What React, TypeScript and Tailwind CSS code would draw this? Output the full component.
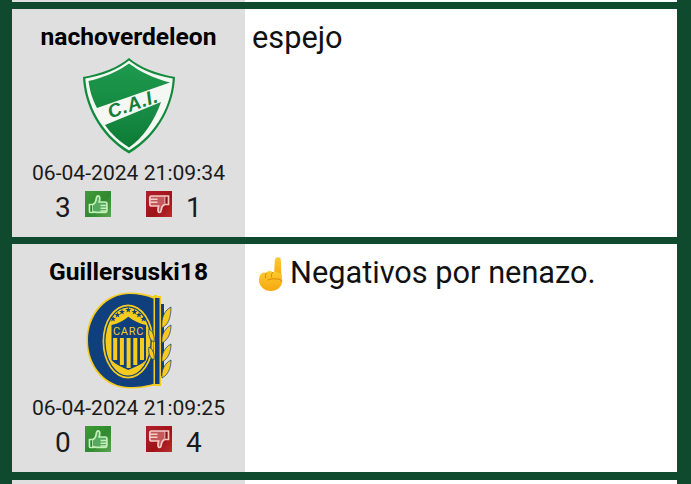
const font = { fontFamily: "Roboto, sans-serif" };

function ThumbUp() {
  return (
    <svg width="26" height="26" viewBox="0 0 26 26" className="block">
      <defs>
        <linearGradient id="gu" x1="0" y1="0" x2="1" y2="1">
          <stop offset="0" stopColor="#3f9c34" />
          <stop offset="0.55" stopColor="#2f8a30" />
          <stop offset="1" stopColor="#5aa44f" />
        </linearGradient>
      </defs>
      <rect width="26" height="26" fill="url(#gu)" />
      <path d="M4.500 13.500h3.500v8H5.500q-1 0-1-1z" fill="#2a7f2e" stroke="#c2f0b6" strokeWidth="1.700" />
      <path d="M8 13.500c2-1 3-3 3.200-5.500.2-1.800.8-3.200 2-3.200 1.500 0 1.800 2.200 1.400 4.200l-.5 2h6q1.800 0 1.800 1.800v7q0 1.500-1.500 1.500H11.500q-2 0-3.500-.8" fill="#57a860" stroke="#c2f0b6" strokeWidth="1.700" />
      <path d="M15.500 14.500h6.500M15.500 17.300h6.500M15.500 20h6" stroke="#c2f0b6" strokeWidth="1.500" />
    </svg>
  );
}

function ThumbDown() {
  return (
    <svg width="26" height="26" viewBox="0 0 26 26" className="block">
      <defs>
        <linearGradient id="gd" x1="0" y1="0" x2="1" y2="1">
          <stop offset="0" stopColor="#b0202a" />
          <stop offset="0.6" stopColor="#a01218" />
          <stop offset="1" stopColor="#bb2f2f" />
        </linearGradient>
      </defs>
      <rect width="26" height="26" fill="url(#gd)" />
      <path d="M18.500 5H22.500v8.500h-4z" fill="#8e1016" stroke="#f6cbc6" strokeWidth="1.700" />
      <path d="M18.500 13.500c-2 1-3 3-3.300 5.500-.2 1.500-.7 2.500-1.700 2.500-1.400 0-1.800-2-1.400-4l.5-2.500H5.500q-1.700 0-1.700-1.700V6.500Q3.800 5 5.500 5h13" fill="#c25a5c" stroke="#f6cbc6" strokeWidth="1.700" />
      <path d="M4 8.200h7.500M4 11.200h7.500" stroke="#f6cbc6" strokeWidth="1.500" />
    </svg>
  );
}

function CaiShield() {
  return (
    <svg width="93" height="96" viewBox="0 0 93 96" className="block">
      <defs>
        <linearGradient id="cai1" x1="0" y1="0" x2="0" y2="1">
          <stop offset="0" stopColor="#1f9a4e" />
          <stop offset="1" stopColor="#148a40" />
        </linearGradient>
        <linearGradient id="cai2" x1="0" y1="0" x2="0" y2="1">
          <stop offset="0" stopColor="#1a9048" />
          <stop offset="1" stopColor="#0c7a34" />
        </linearGradient>
      </defs>
      <path d="M46 0C36 9 18 16 0 19c1 26 15 58 46 76.500C77 77 91 45 92 19 74 16 56 9 46 0z" fill="#128a3d" />
      <path d="M46 2.500C36 11 19 18 2.300 20.500c1.500 25 15 54.500 43.700 72C75 75 88.500 45.500 89.700 20.500 73 18 56 11 46 2.500z" fill="#f4f7f2" />
      <path d="M46 5.500C36 13 20 20 5.500 23c1 8 3.500 18 8.500 27L87 24.500C72 21 56 13 46 5.500z" fill="url(#cai1)" />
      <path d="M78 44 22 67c6 9 14 16 24 22.500C60 80 72 62 78 44z" fill="url(#cai2)" />
      <text x="52" y="52" textAnchor="middle" fontSize="19" fontWeight="700" fontStyle="italic" letterSpacing="0.600" fill="#127f3a" transform="rotate(-19 52 52)" fontFamily="Liberation Sans, sans-serif">C.A.I.</text>
    </svg>
  );
}

function CarcBadge() {
  const navy = "#0f3f7d";
  const gold = "#f6cb1f";
  const stars = [
    [27, 27],
    [31.500, 23],
    [36, 20],
    [42.300, 18],
    [48.500, 20],
    [53, 23],
    [57.500, 27],
  ];
  const star = "M0-3 .8-1 3-1 1.200.3 1.900 2.500 0 1.200-1.900 2.500-1.200.3-3-1-.8-1z";
  return (
    <svg width="86" height="97" viewBox="0 0 86 97" className="block">
      <path d="M68 4.500C60 2 52 .5 44 .5 18 .5.500 22 .500 48.500S18 96.500 44 96.500c10 0 20-1.500 27-4V3h-3z" fill={gold} />
      <path d="M67 6.500C60 3.500 52 2 44 2 20 2 2 23 2 48.500S20 95 44 95c9 0 19-1.500 25.500-4V6z" fill={navy} />
      <ellipse cx="42" cy="49.500" rx="25.500" ry="37" fill={gold} />
      <ellipse cx="42" cy="49.500" rx="23.800" ry="35.300" fill={navy} />
      <ellipse cx="42" cy="49.500" rx="22.500" ry="34" fill={gold} />
      <path d="M67.500 4h7.500v90h-7.500z" fill={gold} />
      <path d="M69 6h4.500v86H69z" fill={navy} />
      <path d="M75 12h3v72h-3z" fill={navy} />
      {[36, 51, 70, 86].map((y) => (
        <path key={y} d={`M76 ${y}c6-3 9-10 9-${y === 36 ? 21 : 18}-6 3-10 10-9 ${y === 36 ? 21 : 18}z`} fill={gold} stroke={navy} strokeWidth="0.700" />
      ))}
      {[37, 55].map((y) => (
        <path key={y} d={`M68 ${y + 13}c-5-2-6-9-5-13 4 2 6 8 5 13z`} fill={gold} stroke={navy} strokeWidth="0.800" />
      ))}
      {stars.map(([x, y]) => (
        <path key={x} d={star} transform={`translate(${x} ${y})`} fill={navy} />
      ))}
      <path d="M42.300 24.700c5 3.800 11 7 17.700 8.300v35c-4 5-12 7-17.700 10C36.500 75 29.500 73 25.500 68V33c7-1.300 12-4.500 16.800-8.300z" fill={navy} />
      {[27.200, 33.900, 40.600, 47.300, 54].map((x, i) => (
        <rect key={x} x={x} y="46" width="4" height={[22, 27, 30, 27, 22][i]} fill={gold} />
      ))}
      <text x="42.500" y="42.500" textAnchor="middle" fontSize="11" fill={gold} fontFamily="Roboto, sans-serif" letterSpacing="0.700">CARC</text>
    </svg>
  );
}

function PointUp() {
  return (
    <svg width="30" height="36" viewBox="0 0 30 36" className="block">
      <defs>
        <linearGradient id="pu" x1="0" y1="0" x2="0" y2="1">
          <stop offset="0" stopColor="#fccb2e" />
          <stop offset="1" stopColor="#f7a70f" />
        </linearGradient>
      </defs>
      <path d="M22 1.200c1.700 0 2.900 1.200 2.900 3.200L25.500 22l-7.500-2 .8-15.500c.1-2 1.500-3.300 3.200-3.300z" fill="url(#pu)" />
      <path d="M3 24c0-3.500 1.800-7 4.500-7.500 1.200-.2 2-.1 2.700.5.700-1.200 1.900-2 3.300-2 1.200 0 2.200.5 3 1.300.8-.7 1.800-1 2.800-.8l6 2.500c.7 2 .9 4 .9 6.500 0 6-4.500 10.500-11.200 10.500C8 35 3 30 3 24z" fill="url(#pu)" />
      <path d="M10.200 17c-.8 1.500-1 3-.7 4.700M16.500 16.300c-1 1.400-1.300 3-1 4.700M12 24c4-1.500 8-1.500 12-.5 1 .3 1.500 1 1 2" stroke="#d98a0a" strokeWidth="1" fill="none" strokeLinecap="round" />
    </svg>
  );
}

type Post = {
  user: string;
  userCls: string;
  logo: React.ReactNode;
  logoCls: string;
  date: string;
  up: number;
  down: number;
  body: React.ReactNode;
};

function Row({ p }: { p: Post }) {
  return (
    <div className="flex h-[228px]">
      <div className="w-[233px] shrink-0 bg-[#dfdfdf] flex flex-col items-center">
        <div className={`font-bold text-black leading-none ${p.userCls}`}>{p.user}</div>
        <div className={p.logoCls}>{p.logo}</div>
        <div className="mt-[7px] text-[21.100px] leading-[24px] text-[#1a1a1a]">{p.date}</div>
        <div className="mt-[7px] w-full h-[30px] text-[28px] leading-[30px] text-[#1a1a1a]">
          <div className="flex items-start pl-[43px]">
            <span className="w-[30px] pt-[1px]">{p.up}</span>
            <span className="-mt-[1px]"><ThumbUp /></span>
            <span className="w-[35px]" />
            <span className="-mt-[1px]"><ThumbDown /></span>
            <span className="pl-[14px] pt-[1px]">{p.down}</span>
          </div>
        </div>
      </div>
      <div className="flex-1 bg-white px-[7px] pt-[12px] text-[30.720px] leading-[34px] text-[#111]">{p.body}</div>
    </div>
  );
}

export default function App() {
  const posts: Post[] = [
    {
      user: "nachoverdeleon",
      userCls: "pt-[16px] text-[24.580px]",
      logo: <CaiShield />,
      logoCls: "mt-[8px] pl-[1px]",
      date: "06-04-2024 21:09:34",
      up: 3,
      down: 1,
      body: <div>espejo</div>,
    },
    {
      user: "Guillersuski18",
      userCls: "pt-[16px] text-[24.580px]",
      logo: <CarcBadge />,
      logoCls: "mt-[7px] pl-[1px]",
      date: "06-04-2024 21:09:25",
      up: 0,
      down: 4,
      body: (
        <div className="flex items-start">
          <span className="ml-[4px]"><PointUp /></span>
          <span className="pl-[4px]">Negativos por nenazo.</span>
        </div>
      ),
    },
  ];
  return (
    <div className="h-[484px] w-[691px] overflow-hidden bg-[#0f4a2f] pl-[12px] pr-[14px]" style={font}>
      <div className="flex h-[2px]">
        <div className="w-[233px] bg-[#dfdfdf]" />
        <div className="flex-1 bg-white" />
      </div>
      <div className="mt-[7px] flex flex-col gap-[7px]">
        {posts.map((p) => (
          <Row key={p.user} p={p} />
        ))}
        <div className="flex h-[10px] mt-[1px]">
          <div className="w-[233px] bg-[#dfdfdf]" />
          <div className="flex-1 bg-white" />
        </div>
      </div>
    </div>
  );
}
